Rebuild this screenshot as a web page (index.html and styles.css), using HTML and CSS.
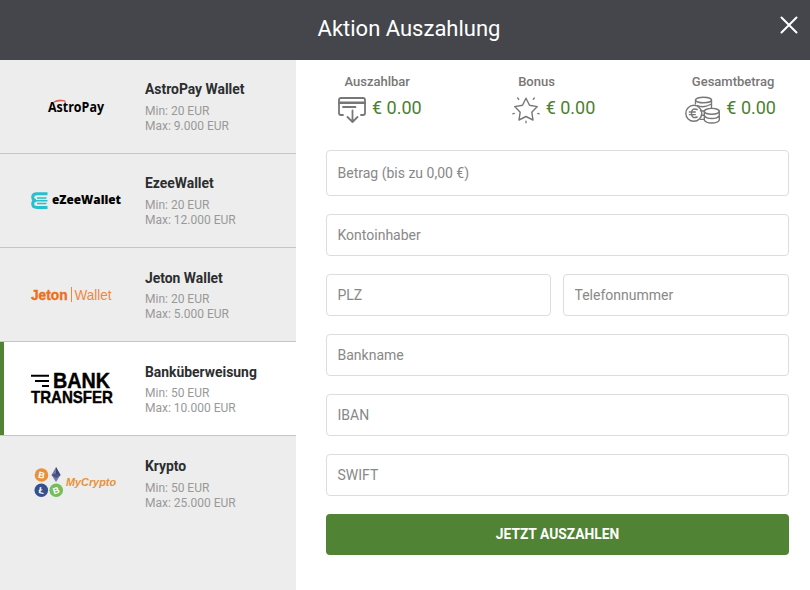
FILE: index.html
```
<!DOCTYPE html>
<html lang="de">
<head>
    <meta charset="UTF-8">
    <meta name="viewport" content="width=device-width, initial-scale=1.0">
    <title>Aktion Auszahlung</title>
    <link rel="stylesheet" href="styles.css">
</head>
<body>
    <header class="header">
        <h1>Aktion Auszahlung</h1>
        <button type="button" class="close" aria-label="Schließen">
            <svg width="18" height="18" viewBox="0 0 18 18">
                <path d="M1.5 1.5L16.5 16.5M16.5 1.5L1.5 16.5" />
            </svg>
        </button>
    </header>
    <main class="content">
        <nav class="methods">
            <a class="method">
                <svg class="logo" viewBox="0 0 145 93">
                    <text class="astropay" x="48" y="51.5" textLength="56" lengthAdjust="spacingAndGlyphs">AstroPay</text>
                    <path d="M53.5 42.3C56 40 61 39.4 65.5 41.2C61 40.6 57 41 53.5 42.3Z" fill="#e0413a" stroke="#e0413a" stroke-width="0.7" />
                </svg>
                <div class="info">
                    <h2>AstroPay Wallet</h2>
                    <p>Min: 20 EUR</p>
                    <p>Max: 9.000 EUR</p>
                </div>
            </a>
            <a class="method">
                <svg class="logo" viewBox="0 0 145 93">
                    <g fill="none" stroke="#27bfcb">
                        <path d="M47.5 39.8H37Q32.7 39.8 32.7 43Q32.7 46.5 36 46.5Q32.7 46.5 32.7 50Q32.7 53.4 37 53.4H47.5" stroke-width="3" />
                        <path d="M37 43.9H46.5M36 46.7H47.5M37 49.5H46.5" stroke-width="1.5" />
                    </g>
                    <text class="ezee" x="52" y="50.3" textLength="69" lengthAdjust="spacingAndGlyphs">eZeeWallet</text>
                </svg>
                <div class="info">
                    <h2>EzeeWallet</h2>
                    <p>Min: 20 EUR</p>
                    <p>Max: 12.000 EUR</p>
                </div>
            </a>
            <a class="method">
                <svg class="logo" viewBox="0 0 145 93">
                    <text class="jeton" x="31" y="51.7" textLength="36.5" lengthAdjust="spacingAndGlyphs">Jeton</text>
                    <path d="M71.5 39V54" stroke="#f0873e" stroke-width="1" />
                    <text class="jeton-light" x="74.5" y="51.7" textLength="37" lengthAdjust="spacingAndGlyphs">Wallet</text>
                </svg>
                <div class="info low">
                    <h2>Jeton Wallet</h2>
                    <p>Min: 20 EUR</p>
                    <p>Max: 5.000 EUR</p>
                </div>
            </a>
            <a class="method active">
                <svg class="logo" viewBox="0 0 145 93">
                    <path d="M31 33.7H49M35 38.9H49M42 44H49" stroke="#000" stroke-width="2" />
                    <text class="bank" x="53" y="46.4" font-size="21.3" textLength="57" lengthAdjust="spacingAndGlyphs">BANK</text>
                    <text class="bank" x="31" y="61" font-size="16.4" textLength="82" lengthAdjust="spacingAndGlyphs">TRANSFER</text>
                </svg>
                <div class="info low">
                    <h2>Banküberweisung</h2>
                    <p>Min: 50 EUR</p>
                    <p>Max: 10.000 EUR</p>
                </div>
            </a>
            <a class="method">
                <svg class="logo" viewBox="0 0 145 93">
                    <circle cx="41.5" cy="39" r="6.8" fill="#e8913a" />
                    <text class="coin" x="41.7" y="42.3" transform="rotate(12 41.5 39)">B</text>
                    <path d="M56 31L60.5 39L56 46L51.5 39Z" fill="#6f7ca8" />
                    <path d="M56 31L60.5 39L56 41.5Z" fill="#3d4775" />
                    <path d="M51.5 39L56 37.2L60.5 39L56 42Z" fill="#4a5384" />
                    <circle cx="41.3" cy="54.3" r="6.8" fill="#35508c" />
                    <text class="coin" x="41.5" y="57.6" transform="rotate(10 41.3 54.3)">Ł</text>
                    <circle cx="56.2" cy="54.3" r="6.8" fill="#74bd58" />
                    <text class="coin" x="56.2" y="57.6" transform="rotate(-18 56.2 54.3)">B</text>
                    <text class="crypto" x="66" y="49.5" textLength="50" lengthAdjust="spacingAndGlyphs">MyCrypto</text>
                </svg>
                <div class="info low">
                    <h2>Krypto</h2>
                    <p>Min: 50 EUR</p>
                    <p>Max: 25.000 EUR</p>
                </div>
            </a>
        </nav>
        <section class="panel">
            <div class="balances">
                <div class="balance">
                    <span class="label">Auszahlbar</span>
                    <div class="amount">
                        <svg width="28" height="28" viewBox="0 0 28 28">
                            <path d="M5 19H3Q1 19 1 17V4Q1 2 3 2H25Q27 2 27 4V17Q27 19 25 19H23" />
                            <path d="M1 6.7H27" stroke-width="2.4" />
                            <path d="M5 11H17.5M14.5 14.5V26M9.5 21L14.5 26L19.5 21" stroke-width="1.8" />
                        </svg>
                        <span>€ 0.00</span>
                    </div>
                </div>
                <div class="balance">
                    <span class="label">Bonus</span>
                    <div class="amount">
                        <svg width="28" height="28" viewBox="0 0 28 28">
                            <path d="M14 2.2L17.5 9.3L25.3 10.6L19.8 16.2L21 24L14 20.5L7 24L8.2 16.2L2.7 10.6L10.5 9.3Z" stroke-width="1.4" />
                            <path d="M5.7 2L6.7 3.4M22.3 2L21.3 3.4M0.8 17.8L2.2 17.3M27.2 17.8L25.8 17.3M14 25.2V26.8" stroke-width="1.3" />
                        </svg>
                        <span>€ 0.00</span>
                    </div>
                </div>
                <div class="balance">
                    <span class="label">Gesamtbetrag</span>
                    <div class="amount">
                        <svg width="35" height="28" viewBox="0 0 35 28">
                            <g stroke-width="1.4">
                                <ellipse cx="18.5" cy="4" rx="8" ry="2.8" />
                                <path d="M10.5 4V8M26.5 4V12M12.5 9.5Q18 12.5 26.5 8M15.5 14.8Q18 15.2 19.5 14.8" />
                                <circle cx="8.8" cy="17.3" r="8" />
                                <ellipse cx="26.8" cy="15.3" rx="7.5" ry="2.9" />
                                <path d="M19.3 15.3V24Q20.5 27 26.8 27Q33 27 34.3 24V15.3M19.3 19.6Q21 22.5 26.8 22.5Q32.5 22.5 34.3 19.6M16.5 19.2H19M15.5 23.4H19" />
                                <path d="M12.2 13.5Q6.5 11.5 6.5 17.3Q6.5 23 12.2 21M4.3 16H10.3M4.3 18.6H10.3" />
                            </g>
                        </svg>
                        <span>€ 0.00</span>
                    </div>
                </div>
            </div>
            <form class="form">
                <input type="text" class="sum" placeholder="Betrag (bis zu 0,00 €)">
                <input type="text" placeholder="Kontoinhaber">
                <div class="form-row">
                    <input type="text" placeholder="PLZ">
                    <input type="text" placeholder="Telefonnummer">
                </div>
                <input type="text" placeholder="Bankname">
                <input type="text" placeholder="IBAN">
                <input type="text" placeholder="SWIFT">
                <button type="submit" class="submit">JETZT AUSZAHLEN</button>
            </form>
        </section>
    </main>
</body>
</html>
```
FILE: styles.css
```
* {
    box-sizing: border-box;
}

body {
    margin: 0;
    height: 590px;
    display: flex;
    flex-direction: column;
    background-color: #ffffff;
    font-family: Roboto, Arial, sans-serif;
    overflow: hidden;
}

.header {
    display: grid;
    grid-template-columns: 1fr auto 1fr;
    align-items: center;
    height: 60px;
    padding: 0 12px 4px 20px;
    background-color: #45464b;
}

.header h1 {
    grid-column: 2;
    margin: 0;
    color: #ffffff;
    font-size: 22px;
    font-weight: 400;
}

.close {
    justify-self: end;
    display: flex;
    margin-bottom: 6px;
    padding: 0;
    border: none;
    background: none;
    cursor: pointer;
}

.close path {
    fill: none;
    stroke: #ffffff;
    stroke-width: 2;
    stroke-linecap: round;
}

.content {
    flex: 1;
    display: flex;
}

.methods {
    width: 296px;
    background-color: #ededed;
}

.method {
    display: flex;
    height: 94px;
    border-bottom: 1px solid #c6c6c6;
    cursor: pointer;
}

.method:last-child {
    border-bottom: none;
}

.method.active {
    background-color: #ffffff;
    box-shadow: inset 4px 0 0 #508334;
}

.logo {
    width: 145px;
    height: 93px;
}

.info {
    padding-top: 20px;
}

.info.low {
    padding-top: 21px;
}

.info h2 {
    margin: 0 0 6px;
    color: #2b2e30;
    font-size: 13.9px;
    font-weight: 700;
    line-height: 18px;
}

.info.low h2 {
    margin-bottom: 5px;
}

.info p {
    margin: 0;
    color: #999999;
    font-size: 12px;
    line-height: 15px;
}

.method:last-child p {
    position: relative;
    top: 1px;
}

/* logos */
.astropay {
    font: 700 15px "Open Sans", sans-serif;
}

.ezee {
    font: 800 12.5px "Open Sans", sans-serif;
}

.jeton {
    fill: #ee6f1a;
    stroke: #ee6f1a;
    stroke-width: 0.4px;
    font: 700 14px "Liberation Sans", Arial, sans-serif;
}

.jeton-light {
    fill: #f0873e;
    font: 300 14px "Liberation Sans", Arial, sans-serif;
}

.bank {
    font-family: "Liberation Sans", Arial, sans-serif;
    font-weight: 700;
    stroke: #000000;
    stroke-width: 0.4px;
}

.coin {
    fill: #ffffff;
    font: 700 9px "Liberation Sans", Arial, sans-serif;
    text-anchor: middle;
}

.crypto {
    fill: #e8913a;
    font: italic 700 11.5px "Liberation Sans", Arial, sans-serif;
}

.panel {
    flex: 1;
    padding: 14px 21px 0 30px;
}

.balances {
    display: flex;
    justify-content: space-between;
    height: 76px;
    padding: 0 13px 0 12px;
}

.label {
    display: block;
    margin-left: 6.5px;
    color: #777777;
    font-size: 13px;
    font-weight: 500;
    line-height: 16px;
}

.amount {
    display: flex;
    gap: 6px;
    margin-top: 5px;
    color: #4c7f31;
    font-size: 18px;
    line-height: 26px;
}

.amount svg {
    margin-top: 1px;
    fill: none;
    stroke: #777777;
    stroke-width: 1.8;
    stroke-linecap: round;
    stroke-linejoin: round;
}

.form {
    display: flex;
    flex-direction: column;
    gap: 18px;
}

.form-row {
    display: grid;
    grid-template-columns: 225px 1fr;
    gap: 12px;
}

.form input {
    width: 100%;
    height: 42px;
    padding: 0 10.5px;
    border: 1px solid #dddddd;
    border-radius: 4px;
    font-family: inherit;
    font-size: 14px;
}

.form input.sum {
    height: 46px;
}

.form input::placeholder {
    color: #888888;
}

.submit {
    height: 41px;
    padding-bottom: 2px;
    border: none;
    border-radius: 4px;
    background-color: #508334;
    color: #ffffff;
    font-family: inherit;
    font-size: 13.8px;
    font-weight: 700;
    cursor: pointer;
}
```
